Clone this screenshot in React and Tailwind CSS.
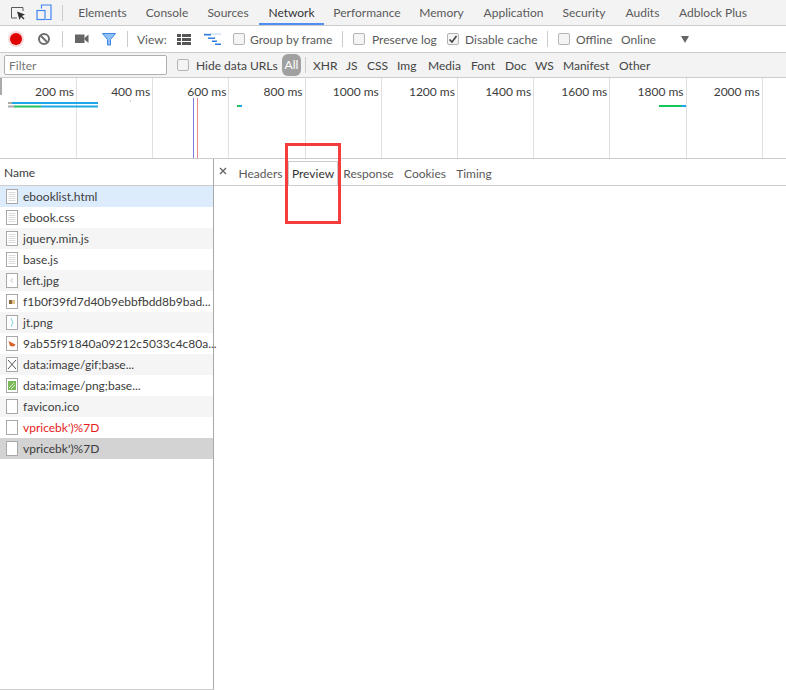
import React from "react";

const mainTabs = [
  { label: "Elements", width: "w-[69px]" },
  { label: "Console", width: "w-[60px]" },
  { label: "Sources", width: "w-[62px]" },
  { label: "Network", width: "w-[65px]", active: true },
  { label: "Performance", width: "w-[86px]" },
  { label: "Memory", width: "w-[63px]" },
  { label: "Application", width: "w-[81px]" },
  { label: "Security", width: "w-[60px]" },
  { label: "Audits", width: "w-[57px]" },
  { label: "Adblock Plus", width: "w-[84px]" },
];

const filterTypes = [
  { label: "XHR", width: "w-[33px]" },
  { label: "JS", width: "w-[21px]" },
  { label: "CSS", width: "w-[30px]" },
  { label: "Img", width: "w-[31px]" },
  { label: "Media", width: "w-[43px]" },
  { label: "Font", width: "w-[34px]" },
  { label: "Doc", width: "w-[30px]" },
  { label: "WS", width: "w-[28px]" },
  { label: "Manifest", width: "w-[56px]" },
  { label: "Other", width: "w-[40px]" },
];

const ticks = ["200 ms", "400 ms", "600 ms", "800 ms", "1000 ms", "1200 ms", "1400 ms", "1600 ms", "1800 ms", "2000 ms"];

const requests = [
  { name: "ebooklist.html", icon: "doc", bg: "bg-[#dcecfc]" },
  { name: "ebook.css", icon: "doc", bg: "bg-white" },
  { name: "jquery.min.js", icon: "doc", bg: "bg-[#f5f5f5]" },
  { name: "base.js", icon: "doc", bg: "bg-white" },
  { name: "left.jpg", icon: "left", bg: "bg-[#f5f5f5]" },
  { name: "f1b0f39fd7d40b9ebbfbdd8b9bad...", icon: "thumb", bg: "bg-white" },
  { name: "jt.png", icon: "jt", bg: "bg-[#f5f5f5]" },
  { name: "9ab55f91840a09212c5033c4c80a...", icon: "orange", bg: "bg-white" },
  { name: "data:image/gif;base...", icon: "cross", bg: "bg-[#f5f5f5]" },
  { name: "data:image/png;base...", icon: "green", bg: "bg-white" },
  { name: "favicon.ico", icon: "blank", bg: "bg-[#f5f5f5]" },
  { name: "vpricebk')%7D", icon: "blank", bg: "bg-white", text: "text-[#e51c1c]" },
  { name: "vpricebk')%7D", icon: "blank", bg: "bg-[#d3d3d3]" },
];

const detailTabs = [
  { label: "Headers", width: "w-[55px]" },
  { label: "Preview", width: "w-[50px]", active: true },
  { label: "Response", width: "w-[61px]" },
  { label: "Cookies", width: "w-[52px]" },
  { label: "Timing", width: "w-[46px]" },
];

const FileIcon = ({ kind }) => (
  <svg width="13" height="16" viewBox="0 0 13 16" className="shrink-0">
    <rect x="0.5" y="0.5" width="11" height="14" fill="#fff" stroke="#a8a8a8" />
    {kind === "doc" && (
      <path d="M2.5 3.5h7M2.5 5.5h7M2.5 7.5h7M2.5 9.5h7M2.5 11.5h7" stroke="#dadada" fill="none" />
    )}
    {kind === "left" && <path d="M7 5.5 4.5 7.5 7 9.5" stroke="#c4c4c4" fill="none" />}
    {kind === "thumb" && (
      <>
        <rect x="3" y="6" width="3" height="4" fill="#8a6a3a" />
        <rect x="6" y="6" width="3" height="4" fill="#e0c48c" />
      </>
    )}
    {kind === "jt" && <path d="M5 3 7 7.500 5 12" stroke="#7fd4dc" fill="none" />}
    {kind === "orange" && <path d="M2.500 5 9.500 8.500 8 10.500 4 10Z" fill="#d9622b" />}
    {kind === "cross" && <path d="M2 3 10 12M10 3 2 12" stroke="#555" fill="none" />}
    {kind === "green" && (
      <>
        <rect x="2" y="3" width="8" height="9" fill="#7ab85a" />
        <path d="M3 10 8 5M5 11 9 7" stroke="#d8eccb" fill="none" />
      </>
    )}
  </svg>
);

const Checkbox = ({ checked, className = "" }) => (
  <span className={`${className} flex h-[12px] w-[12px] shrink-0 items-center justify-center rounded-[2px] border border-[#b4b4b4] bg-[#f4f4f4]`}>
    {checked && (
      <svg width="10" height="10" viewBox="0 0 10 10">
        <path d="M1.500 5.500 4 8 8.500 2" stroke="#444" strokeWidth="1.600" fill="none" />
      </svg>
    )}
  </span>
);

const Divider = ({ className = "" }) => <span className={`${className} h-[16px] w-px shrink-0 bg-[#ccc]`} />;

const App = () => {
  return (
    <div className="relative flex h-[690px] w-[786px] flex-col overflow-hidden bg-white font-['Lato',sans-serif] text-[12px] leading-[16px] text-[#5a5a5a]">
      {/* main devtools tabs */}
      <div className="flex h-[26px] shrink-0 items-center border-b border-[#ccc] bg-[#f3f3f3]">
        <div className="flex w-[68px] shrink-0 items-center pl-[10px]">
          <svg width="16" height="16" viewBox="0 0 16 16" className="shrink-0">
            <path d="M7 13H1.500V2.500H13V6" stroke="#5a5a5a" fill="none" />
            <path d="M7 6.500 15 9.500 12 11 14.500 13.500 13.500 14.500 11 12 9.500 15Z" fill="#333" />
          </svg>
          <svg width="16" height="17" viewBox="0 0 16 17" className="ml-[10px] shrink-0">
            <path d="M5.500 4.500V1h9.500v14.500H10" stroke="#4285f4" strokeWidth="1.200" fill="none" />
            <rect x="1" y="6.500" width="8" height="9" stroke="#4285f4" strokeWidth="1.200" fill="none" />
          </svg>
          <Divider className="ml-[10px]" />
        </div>
        <div className="flex h-full items-stretch">
          {mainTabs.map((tab) => (
            <div
              key={tab.label}
              className={`${tab.width} flex shrink-0 items-center justify-center whitespace-nowrap ${
                tab.active ? "border-b-2 border-[#4d8ef0] pt-[2px] text-[#333]" : "pt-[1px]"
              }`}
            >
              {tab.label}
            </div>
          ))}
        </div>
      </div>

      {/* recording toolbar */}
      <div className="flex h-[27px] shrink-0 items-center border-b border-[#ccc] pl-[8px]">
        <span className="flex h-[16px] w-[16px] shrink-0 items-center justify-center rounded-full bg-[#f8d8d8]">
          <span className="h-[12px] w-[12px] rounded-full bg-[#e00000]" />
        </span>
        <svg width="14" height="14" viewBox="0 0 14 14" className="ml-[13px] shrink-0">
          <circle cx="7" cy="7" r="5" stroke="#6e6e6e" strokeWidth="2" fill="none" />
          <path d="M3.500 3.500 10.500 10.500" stroke="#6e6e6e" strokeWidth="2" />
        </svg>
        <Divider className="ml-[11px]" />
        <svg width="14" height="10" viewBox="0 0 14 10" className="ml-[12px] shrink-0">
          <rect x="0" y="0.500" width="9.500" height="8.500" fill="#666" />
          <path d="M9.500 4 13.500 0.500V9L9.500 5.500Z" fill="#666" />
        </svg>
        <svg width="14" height="13" viewBox="0 0 14 13" className="ml-[13px] shrink-0">
          <path d="M0.500 0.500h13L8.500 6.500V12H5.500V6.500Z" fill="#8fc1f5" stroke="#3d85e6" />
        </svg>
        <Divider className="ml-[11px]" />
        <span className="ml-[9px] w-[40px] shrink-0 pt-[1px]">View:</span>
        <svg width="14" height="11" viewBox="0 0 14 11" className="shrink-0">
          <path d="M0 0h4v3H0ZM5 0h9v3H5ZM0 4h4v3H0ZM5 4h9v3H5ZM0 8h4v3H0ZM5 8h9v3H5Z" fill="#555" />
        </svg>
        <svg width="17" height="12" viewBox="0 0 17 12" className="ml-[13px] shrink-0">
          <path d="M0 0h17v2H0Z" fill="#dbe9fb" />
          <path d="M0 1h7v1.500H0ZM4 4.500h7V6H4ZM8 7.500h5V9H8ZM11 10.500h6V12h-6Z" fill="#2f7de1" />
        </svg>
        <Checkbox className="ml-[12px]" />
        <span className="ml-[5px] w-[92px] shrink-0 whitespace-nowrap pt-[1px]">Group by frame</span>
        <Divider />
        <Checkbox className="ml-[10px]" />
        <span className="ml-[7px] w-[75px] shrink-0 whitespace-nowrap pt-[1px]">Preserve log</span>
        <Checkbox checked />
        <span className="ml-[6px] w-[82px] shrink-0 whitespace-nowrap pt-[1px]">Disable cache</span>
        <Divider />
        <Checkbox className="ml-[10px]" />
        <span className="ml-[6px] w-[45px] shrink-0 whitespace-nowrap pt-[1px]">Offline</span>
        <span className="w-[60px] shrink-0 pt-[1px]">Online</span>
        <span className="h-0 w-0 border-x-[4px] border-t-[7px] border-x-transparent border-t-[#666]" />
      </div>

      {/* filter bar */}
      <div className="flex h-[25px] shrink-0 items-center border-b border-[#ccc] bg-[#f3f3f3] pl-[4px]">
        <div className="flex h-[20px] w-[163px] shrink-0 items-center rounded-[2px] border border-[#b0b0b0] bg-white pl-[4px] pt-[1px] text-[#757575]">
          Filter
        </div>
        <Checkbox className="ml-[10px]" />
        <span className="ml-[7px] w-[86px] shrink-0 whitespace-nowrap pt-[2px] text-[#444]">Hide data URLs</span>
        <span className="flex h-[22px] w-[19px] shrink-0 items-center justify-center rounded-[6px] bg-[#a0a0a0] text-white">All</span>
        <Divider className="ml-[4px] mr-[7px]" />
        {filterTypes.map((type) => (
          <span key={type.label} className={`${type.width} shrink-0 whitespace-nowrap pt-[2px] text-[#444]`}>
            {type.label}
          </span>
        ))}
      </div>

      {/* overview timeline */}
      <div className="relative h-[81px] shrink-0 border-b border-[#ccc]">
        <div className="grid h-full grid-cols-[77px_repeat(9,76.2px)_1fr]">
          {ticks.map((tick) => (
            <div key={tick} className="border-r border-[#e0e0e0] pr-[2px] pt-[6px] text-right whitespace-nowrap text-[#3c3c3c]">
              {tick}
            </div>
          ))}
        </div>
        <svg width="786" height="80" className="absolute left-0 top-0">
          <rect x="0" y="0" width="2" height="17" fill="#aaa" />
          <rect x="8" y="24" width="4" height="2" fill="#aaa" />
          <rect x="12" y="24" width="86" height="2" fill="#1da7e8" />
          <rect x="8" y="27.500" width="6" height="2" fill="#aaa" />
          <rect x="14" y="27.500" width="27" height="2" fill="#1fc45e" />
          <rect x="41" y="27.500" width="57" height="2" fill="#1da7e8" />
          <rect x="130" y="22" width="1" height="2" fill="#ccc" />
          <rect x="193" y="20" width="1" height="60" fill="#7a7ae6" />
          <rect x="197" y="20" width="1" height="60" fill="#e88a8a" />
          <rect x="237" y="27" width="3" height="2" fill="#1fc45e" />
          <rect x="240" y="27" width="2" height="2" fill="#1da7e8" />
          <rect x="659" y="27" width="22" height="2" fill="#10c85a" />
          <rect x="681" y="27" width="5" height="2" fill="#1da7e8" />
        </svg>
      </div>

      {/* requests + detail */}
      <div className="flex min-h-0 flex-1">
        <div className="flex w-[214px] shrink-0 flex-col border-r border-[#a8a8a8]">
          <div className="flex h-[27px] shrink-0 items-center border-b border-[#ccc] pl-[4px] pt-[1px] text-[#3c3c3c]">Name</div>
          {requests.map((req, i) => (
            <div key={i} className={`${req.bg} ${req.text || "text-[#3c3c3c]"} flex h-[21px] shrink-0 items-center pl-[6px] whitespace-nowrap`}>
              <FileIcon kind={req.icon} />
              <span className="ml-[4px]">{req.name}</span>
            </div>
          ))}
        </div>
        <div className="flex h-[27px] flex-1 items-stretch border-b border-[#ccc]">
          <div className="flex w-[19px] shrink-0 items-center justify-center pb-[3px] pr-[2px]">
            <svg width="8" height="8" viewBox="0 0 8 8">
              <path d="M1 1 7 7M7 1 1 7" stroke="#666" strokeWidth="1.400" />
            </svg>
          </div>
          {detailTabs.map((tab) => (
            <div
              key={tab.label}
              className={`${tab.width} flex shrink-0 items-center justify-center whitespace-nowrap ${
                tab.active ? "mt-[2px] border-x border-t border-[#ccc] pt-[1px] text-[#333]" : "pt-[3px]"
              }`}
            >
              {tab.label}
            </div>
          ))}
        </div>
      </div>

      {/* annotation over the Preview tab */}
      <div className="absolute left-[285px] top-[143px] h-[81px] w-[56px] border-[3px] border-[#f43c3c]" />
      <div className="absolute bottom-0 left-0 h-px w-[214px] bg-[#ccc]" />
    </div>
  );
};

export default App;
